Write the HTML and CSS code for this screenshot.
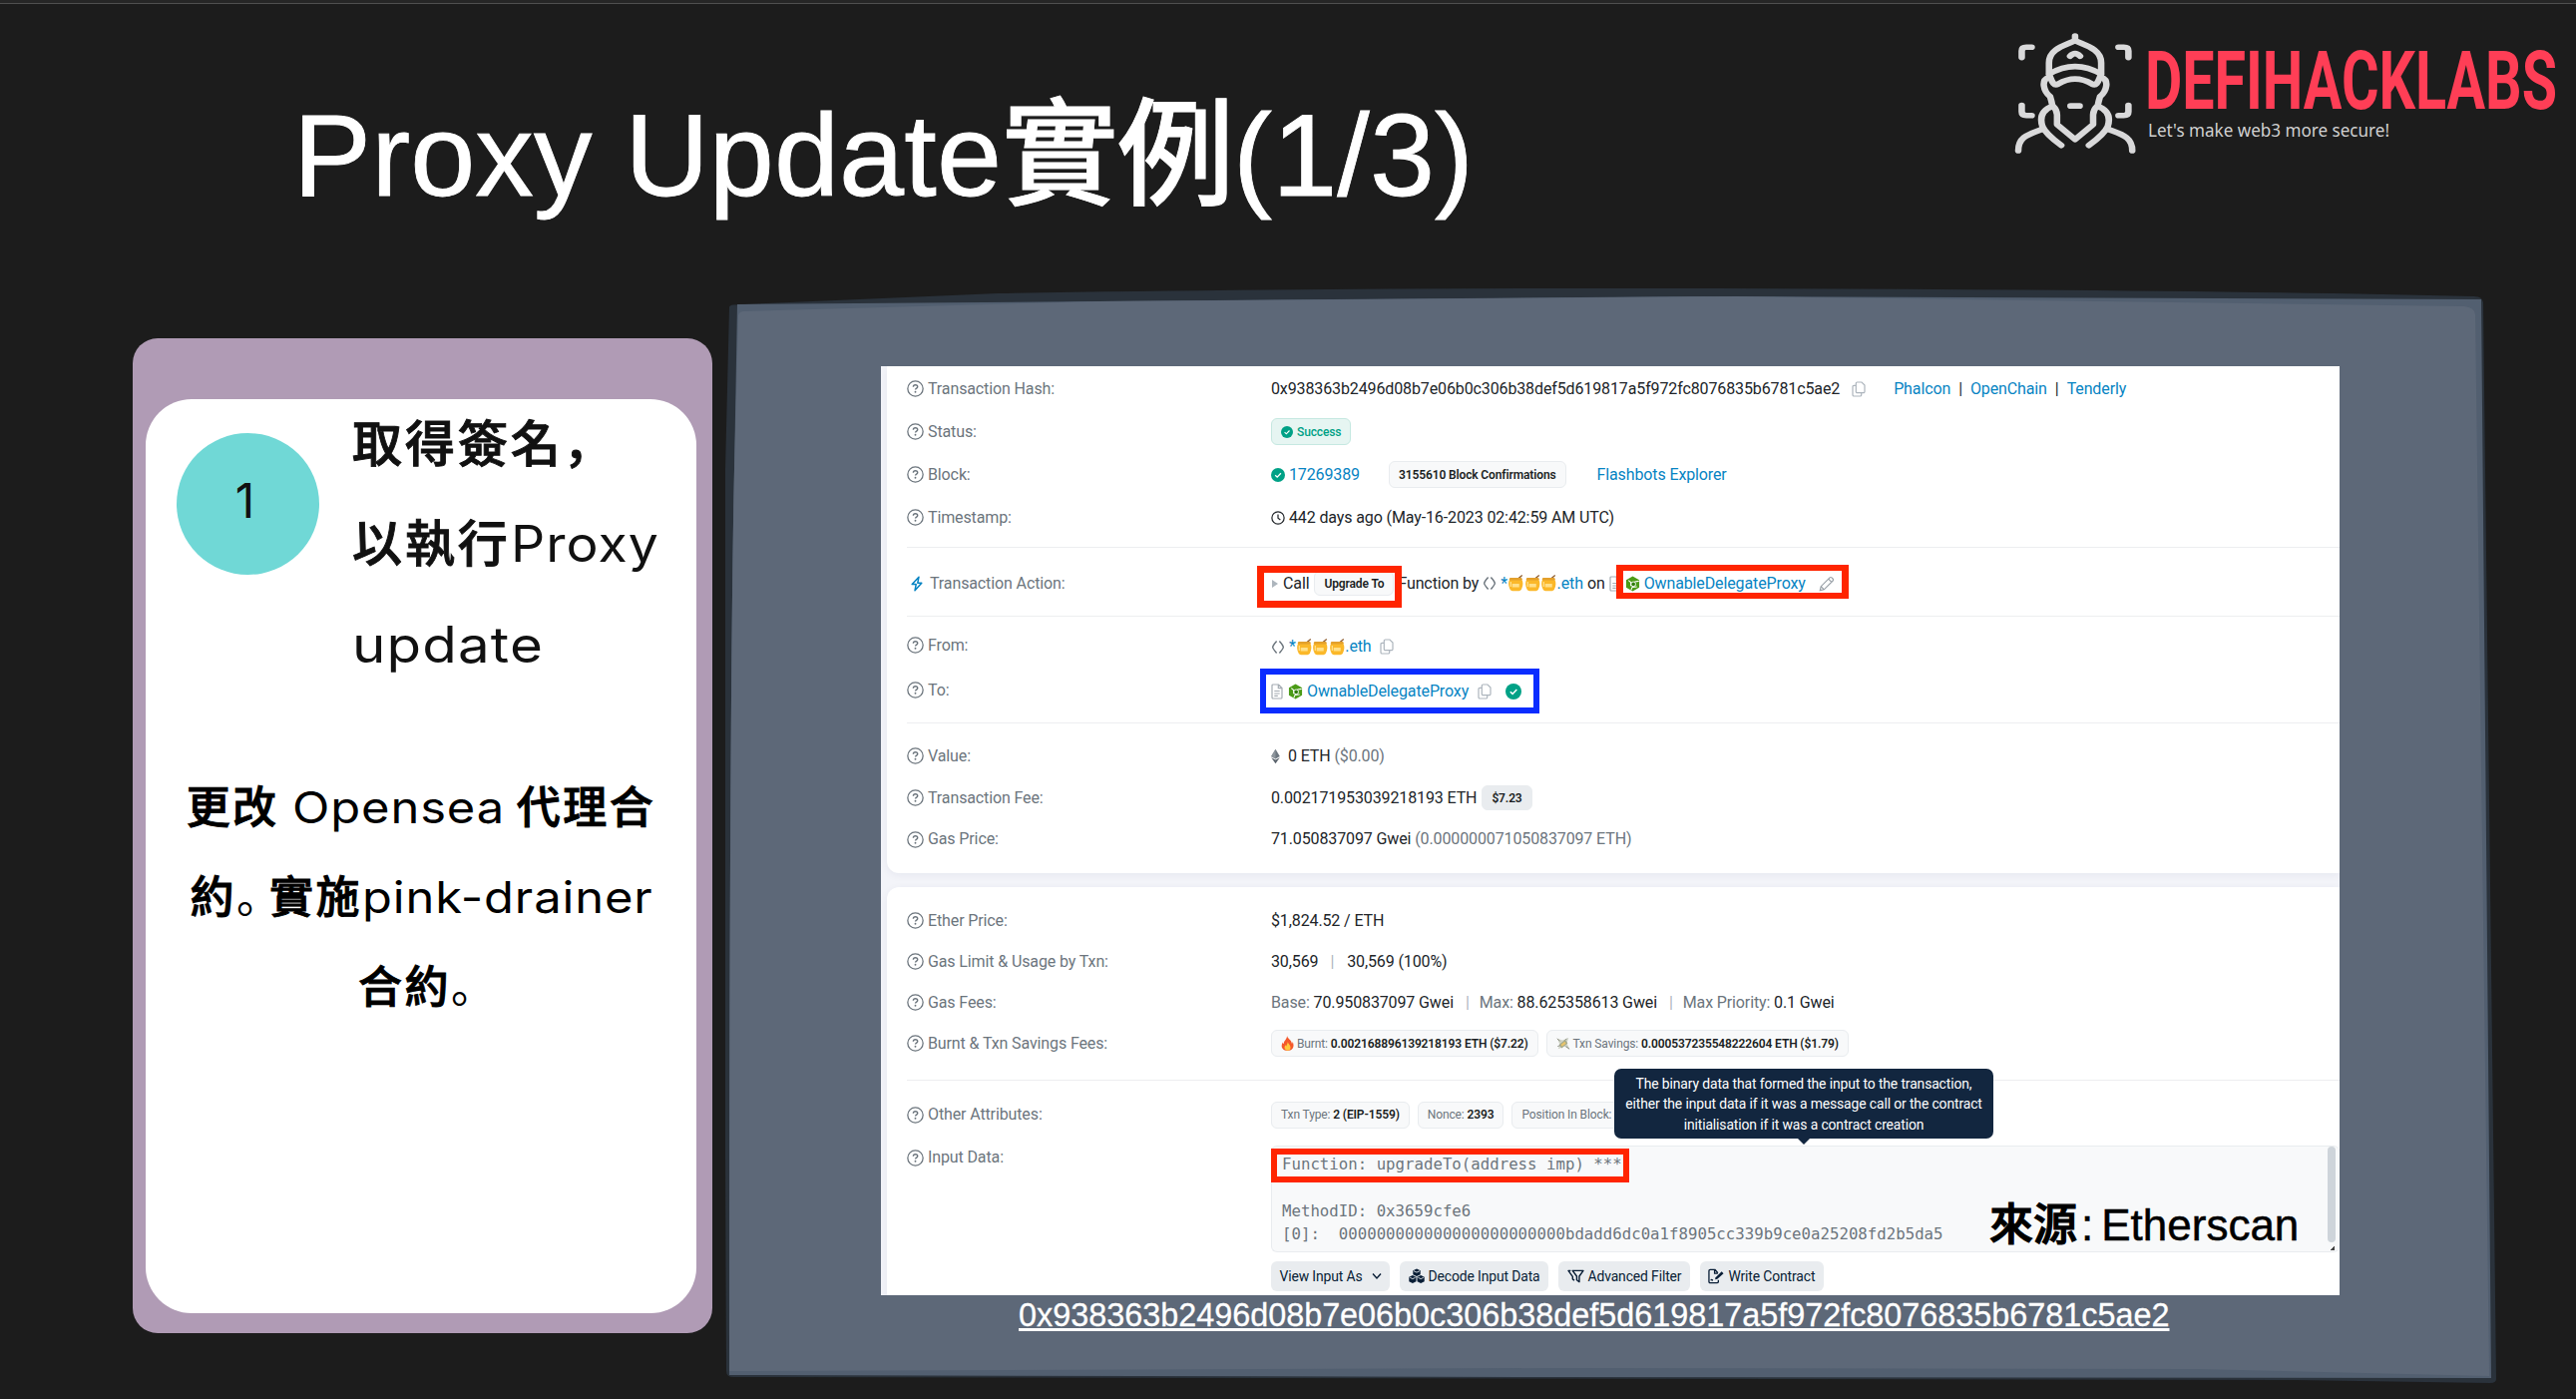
FILE: index.html
```html
<!DOCTYPE html>
<html lang="zh-Hant">
<head>
<meta charset="utf-8">
<title>Proxy Update實例(1/3)</title>
<link rel="stylesheet" href="styles.css">
</head>
<body>
<svg width="0" height="0" class="defs" aria-hidden="true">
  <symbol id="help" viewBox="0 0 16 16"><circle cx="8" cy="8" r="7.2" fill="none" stroke="#6c757d" stroke-width="1.2"/><path d="M6 6.3C6 5 6.9 4.5 8 4.5s2.1.7 2.1 1.8C10.1 7.600 8 7.600 8 9" fill="none" stroke="#6c757d" stroke-width="1.3"/><circle cx="8" cy="11" r=".9" fill="#6c757d"/></symbol>
  <symbol id="copy" viewBox="0 0 14 16"><path d="M5.500 1H10l3 3v6.500a1.200 1.200 0 0 1-1.200 1.200H5.500a1.200 1.200 0 0 1-1.200-1.200V2.200A1.200 1.200 0 0 1 5.500 1zM4 4.300H2.200A1.200 1.200 0 0 0 1 5.500v8.300A1.200 1.200 0 0 0 2.200 15h6.300a1.200 1.200 0 0 0 1.200-1.200v-2" fill="none" stroke="#adb5bd" stroke-width="1.2"/></symbol>
  <symbol id="check" viewBox="0 0 16 16"><circle cx="8" cy="8" r="8" fill="#00a186"/><path d="M4.800 8.200l2.300 2.200 4.200-4.400" fill="none" stroke="#fff" stroke-width="1.5"/></symbol>
  <symbol id="clock" viewBox="0 0 16 16"><circle cx="8" cy="8" r="7" fill="none" stroke="#212529" stroke-width="1.4"/><path d="M8 4v4.300l2.700 1.900" fill="none" stroke="#212529" stroke-width="1.4"/></symbol>
  <symbol id="bolt" viewBox="0 0 12 16"><path d="M8 1.200L1.200 8.600h4L4 14.800l6.800-7.600h-4z" fill="none" stroke="#0784c3" stroke-width="1.5" stroke-linejoin="round"/></symbol>
  <symbol id="code" viewBox="0 0 14 14"><path d="M5.600 1C4 3 1.700 5.500 1.700 7S4 11 5.600 13M8.400 1C10 3 12.300 5.500 12.300 7S10 11 8.400 13" fill="none" stroke="#6c757d" stroke-width="1.400"/></symbol>
  <symbol id="honey" viewBox="0 0 16 17"><path d="M9 5L14.500.6" stroke="#8d5a2b" stroke-width="1.300"/><path d="M2 4.500h12c1.600 2.500 1.600 6.500-.5 10.500a3 3 0 0 1-2.200 1.200H4.700A3 3 0 0 1 2.500 15C.4 11 .4 7 2 4.500z" fill="#fbb829"/><rect x="1.600" y="3" width="12.800" height="2.400" rx="1.200" fill="#e3a02c"/><path d="M4.500 9h7v3.500h-7z" fill="#ffe08a"/><path d="M3 7v5" stroke="#ffe9a8" stroke-width="1"/></symbol>
  <symbol id="doc" viewBox="0 0 12 16"><path d="M2 1h5.500L11 4.500V14a1 1 0 0 1-1 1H2a1 1 0 0 1-1-1V2a1 1 0 0 1 1-1zM7.300 1v3.700H11M3.300 7.500h5.400M3.300 10h5.400M3.300 12.300h3.500" fill="none" stroke="#a5acb3" stroke-width="1.2"/></symbol>
  <symbol id="cube" viewBox="0 0 16 16"><path d="M8 0l7 4v8l-7 4-7-4V4z" fill="#4b9b17"/><path d="M3.500 4.500l2.500 2v4M14.600 5.200L10 5.800M6.200 14.800l1.300-3 5-.5" fill="none" stroke="#fff" stroke-width="1.100"/><circle cx="8.700" cy="8.400" r="2.500" fill="#2f7d0c" stroke="#fff" stroke-width="1"/></symbol>
  <symbol id="pencil" viewBox="0 0 16 16"><path d="M1.300 14.700l.9-4L11 1.900a1.400 1.400 0 0 1 2 0l1.100 1.100a1.400 1.400 0 0 1 0 2L5.300 13.800zM9.700 3.200l3.100 3.100M2.200 10.700l3.100 3.100" fill="none" stroke="#9aa1a8" stroke-width="1.200"/></symbol>
  <symbol id="eth" viewBox="0 0 10 16"><path d="M5 0l4.800 8L5 10.800.2 8z" fill="#6d7780"/><path d="M5 0v10.800L.2 8z" fill="#8d959c"/><path d="M.2 9.300L5 12l4.800-2.700L5 16z" fill="#5b646d"/></symbol>
  <symbol id="fire" viewBox="0 0 14 16"><path d="M6.500 0c.6 3 5 4.600 5.300 8.500.6-.6.700-1.600.6-2.300C14.500 9.500 14 16 7 16S-.3 10 2 6.800c.1 1 .5 1.500 1 1.800C3 5 6.500 4 6.500 0z" fill="#f4592b"/><path d="M7.300 6.500c0 2 3 3.300 3 6 0 2-1.500 3.200-3.200 3.200s-3.300-1.200-3.300-3.100c0-1.200.7-2 1.200-2.600.2.800.5 1 .9 1.100 0-1.800 1.400-2.500 1.400-4.600z" fill="#ffc93c"/></symbol>
  <symbol id="money" viewBox="0 0 16 16"><path d="M1 2l6 2 7-3-2 6 3 7-6-3-7 3 2-5z" fill="#cfd3c6"/><path d="M3 9l7-5.500 3 4L6 13z" fill="#a3a88a"/><path d="M5 9l4.500-3.500 1.500 2.200L6.500 11z" fill="#e9c46a"/><path d="M1 2l3 3M15 14l-4-3M1.500 11L4 10M12 2l-2 2" stroke="#7d8073" stroke-width="1"/></symbol>
  <symbol id="cubes" viewBox="0 0 16 16"><path d="M8 .5l3.700 1.800v3.900L8 8 4.300 6.200V2.300zM3.900 7l3.600 1.800v4.400L3.900 15 .3 13.200V8.800zM12.100 7l3.600 1.800v4.400L12.100 15l-3.600-1.800V8.800z" fill="#081d35"/><path d="M5 2.700l3 1.400 3-1.400M1.200 9.300l2.700 1.300 2.700-1.300M9.400 9.300l2.700 1.300 2.700-1.300" fill="none" stroke="#e9ecef" stroke-width=".9"/></symbol>
  <symbol id="filter" viewBox="0 0 18 16"><path d="M5.500 1.500H17l-4.300 6v6l-2.700-2V7.500zM3.500 1.500H1l4.600 6.300V10.500l1.800 1.400" fill="none" stroke="#081d35" stroke-width="1.500" stroke-linejoin="round"/></symbol>
  <symbol id="write" viewBox="0 0 17 16"><path d="M10.500 4.500L7.500 1H2.200A1.200 1.200 0 0 0 1 2.200v11.600A1.200 1.200 0 0 0 2.200 15h7.600a1.200 1.200 0 0 0 1.200-1.200V12M7 1v4h3.500M3 12.500c1-2 1.500-.3 2.300 0" fill="none" stroke="#081d35" stroke-width="1.400"/><path d="M7.500 11.500l.5-2.300L14.500 3l2 2-6.600 6z" fill="#081d35"/></symbol>
</svg>

<header class="top">
  <h1 class="title">Proxy Update<span class="title-cjk">實例</span>(1/3)</h1>
  <div class="brand">
    <svg class="brand-face" viewBox="100 95 325 370" preserveAspectRatio="none" fill="none" stroke="#d9d9da" stroke-width="17" stroke-linecap="round" stroke-linejoin="round">
      <path d="M261 107V121M261 121C240 134 193 144 193 188V222M261 121C282 134 329 144 329 188V222M193 222Q261 176 329 222M193 222C200 240 203 260 217 252Q261 222 305 252C319 260 322 240 329 222M248 168Q261 152 274 168"/>
      <path d="M192 232C172 240 178 272 196 290Q200 305 202 318M330 232C350 240 344 272 326 290Q322 305 320 318M203 318Q214 330 214 345V374L261 419L308 374V345Q308 330 319 318M203 318C176 330 168 352 176 380Q184 402 225 437M319 318C346 330 354 352 346 380Q338 402 297 437M176 388C140 404 113 410 113 453M346 388C382 404 410 410 410 453M249 318H273"/>
      <path d="M122 172V152Q122 141 134 141H148M374 141H388Q400 141 400 152V172M122 316V336Q122 347 134 347H148M374 347H388Q400 347 400 336V316"/>
    </svg>
    <svg class="brand-words" width="424" height="110" viewBox="0 0 424 110">
      <text class="brand-name" x="1" y="76" textLength="413" lengthAdjust="spacingAndGlyphs">DEFIHACKLABS</text>
      <text class="brand-tag" x="4" y="104" textLength="242" lengthAdjust="spacingAndGlyphs">Let's make web3 more secure!</text>
    </svg>
  </div>
</header>

<main class="main">
  <section class="card">
    <div class="card-body">
      <div class="step">
        <div class="step-no">1</div>
        <h2 class="step-title"><span class="han" lang="ja">取得簽名，</span><br><span class="han">以執行</span><span class="wide-p">Proxy</span><br><span class="wide-u">update</span></h2>
      </div>
      <p class="step-text"><span class="han2">更改</span> <span class="wide-o">Opensea</span> <span class="han2">代理合<br>約</span><span class="stop" lang="ja">。</span><span class="han2">實施</span><span class="wide-d">pink-drainer</span><br><span class="han2">合約</span><span class="stop" lang="ja">。</span></p>
    </div>
  </section>

  <section class="board">
    <svg class="board-bg" width="1776" height="1098" viewBox="727 289 1776 1098" aria-hidden="true">
      <path d="M731 308Q731 306 735 305.500L1000 294Q1300 288.500 1720 289Q2200 290 2480 297Q2488 297 2489 303L2502 1382Q2502 1386 2496 1386L2300 1383L735 1380Q728 1380 728 1374Q725 800 727 470z" fill="#2a323b"/>
      <path d="M739 305L1100 302L1700 297L2487 300L2497 1381L1560 1380L731 1378Q731 700 736 470z" fill="#525f70"/>
      <path d="M740 316Q741 312 746 312L1100 302L1740 297L2470 307Q2480 308 2481 315L2495 1379L2200 1372L1560 1371L731 1374Q731 700 736 470z" fill="#5d6878"/>
    </svg>

    <div class="shot">
      <div class="panel panel-a">
        <div class="group g1">
          <div class="row"><span class="label"><svg><use href="#help"/></svg>Transaction Hash:</span><span class="val">0x938363b2496d08b7e06b0c306b38def5d619817a5f972fc8076835b6781c5ae2<svg class="i-copy m12"><use href="#copy"/></svg><a class="m28">Phalcon</a><span class="bar">|</span><a>OpenChain</a><span class="bar">|</span><a>Tenderly</a></span></div>
          <div class="row"><span class="label"><svg><use href="#help"/></svg>Status:</span><span class="val"><span class="pill ok"><svg class="i12"><use href="#check"/></svg>Success</span></span></div>
          <div class="row"><span class="label"><svg><use href="#help"/></svg>Block:</span><span class="val"><svg class="i14"><use href="#check"/></svg><a class="m4">17269389</a><span class="pill strong conf">3155610 Block Confirmations</span><a class="m31">Flashbots Explorer</a></span></div>
          <div class="row"><span class="label"><svg><use href="#help"/></svg>Timestamp:</span><span class="val"><svg class="i14"><use href="#clock"/></svg><span class="m4">442 days ago (May-16-2023 02:42:59 AM UTC)</span></span></div>
        </div>
        <div class="group g2">
          <div class="row"><span class="label act"><svg><use href="#bolt"/></svg>Transaction Action:</span><span class="val"><i class="tri"></i>Call<span class="pill strong upg">Upgrade To</span><span class="m4">Function by</span><svg class="i-code m4"><use href="#code"/></svg><a class="m4 ens">*<svg><use href="#honey"/></svg><svg><use href="#honey"/></svg><svg><use href="#honey"/></svg>.eth</a><span class="m4">on</span><svg class="i-doc m4"><use href="#doc"/></svg><svg class="i-cube m4"><use href="#cube"/></svg><a class="m4">OwnableDelegateProxy</a><svg class="i16 m13"><use href="#pencil"/></svg></span></div>
        </div>
        <div class="group g3">
          <div class="row"><span class="label"><svg><use href="#help"/></svg>From:</span><span class="val low"><svg class="i-code"><use href="#code"/></svg><a class="m4 ens">*<svg><use href="#honey"/></svg><svg><use href="#honey"/></svg><svg><use href="#honey"/></svg>.eth</a><svg class="i-copy m8"><use href="#copy"/></svg></span></div>
          <div class="row"><span class="label"><svg><use href="#help"/></svg>To:</span><span class="val low"><svg class="i-doc"><use href="#doc"/></svg><svg class="i-cube m5"><use href="#cube"/></svg><a class="m4">OwnableDelegateProxy</a><svg class="i-copy m9"><use href="#copy"/></svg><svg class="i16 m14"><use href="#check"/></svg></span></div>
        </div>
        <div class="group g4">
          <div class="row"><span class="label"><svg><use href="#help"/></svg>Value:</span><span class="val"><svg class="i-eth"><use href="#eth"/></svg><span class="m8">0 ETH <em>($0.00)</em></span></span></div>
          <div class="row"><span class="label"><svg><use href="#help"/></svg>Transaction Fee:</span><span class="val">0.002171953039218193 ETH<span class="pill strong usd">$7.23</span></span></div>
          <div class="row"><span class="label"><svg><use href="#help"/></svg>Gas Price:</span><span class="val">71.050837097 Gwei <em>(0.000000071050837097 ETH)</em></span></div>
        </div>
      </div>

      <div class="panel panel-b">
        <div class="group g5">
          <div class="row"><span class="label"><svg><use href="#help"/></svg>Ether Price:</span><span class="val">$1,824.52 / ETH</span></div>
          <div class="row"><span class="label"><svg><use href="#help"/></svg>Gas Limit &amp; Usage by Txn:</span><span class="val">30,569<span class="sep">|</span>30,569 (100%)</span></div>
          <div class="row"><span class="label"><svg><use href="#help"/></svg>Gas Fees:</span><span class="val"><em>Base: </em>70.950837097 Gwei<span class="sep tight">|</span><em>Max: </em>88.625358613 Gwei<span class="sep tight">|</span><em>Max Priority: </em>0.1 Gwei</span></div>
          <div class="row"><span class="label"><svg><use href="#help"/></svg>Burnt &amp; Txn Savings Fees:</span><span class="val"><span class="pill"><svg class="i-fire"><use href="#fire"/></svg><em>Burnt: </em><b>0.002168896139218193 ETH ($7.22)</b></span><span class="pill m8"><svg class="i-money"><use href="#money"/></svg><em>Txn Savings: </em><b>0.000537235548222604 ETH ($1.79)</b></span></span></div>
        </div>
        <div class="group g6">
          <div class="row"><span class="label"><svg><use href="#help"/></svg>Other Attributes:</span><span class="val"><span class="pill"><em>Txn Type: </em><b>2 (EIP-1559)</b></span><span class="pill m8"><em>Nonce: </em><b>2393</b></span><span class="pill m8"><em>Position In Block: </em><b>186</b></span></span></div>
          <div class="input-row"><span class="label"><svg><use href="#help"/></svg>Input Data:</span>
            <div class="input-col">
              <div class="code"><pre>Function: upgradeTo(address imp) ***

MethodID: 0x3659cfe6
[0]:  000000000000000000000000bdadd6dc0a1f8905cc339b9ce0a25208fd2b5da5</pre><div class="scroll"><i class="thumb"></i><i class="grip"></i></div></div>
              <div class="btns">
                <span class="btn">View Input As<svg class="i-chev" viewBox="0 0 10 8"><path d="M1 1.500l4 4.500 4-4.500" fill="none" stroke="#081d35" stroke-width="1.400"/></svg></span>
                <span class="btn"><svg class="i16"><use href="#cubes"/></svg>Decode Input Data</span>
                <span class="btn"><svg class="i-filter"><use href="#filter"/></svg>Advanced Filter</span>
                <span class="btn"><svg class="i16"><use href="#write"/></svg>Write Contract</span>
              </div>
            </div>
          </div>
        </div>
      </div>

      <div class="mark mark-call"></div>
      <div class="mark mark-proxy"></div>
      <div class="mark mark-to"></div>
      <div class="mark mark-fn"></div>
      <div class="tip">The binary data that formed the input to the transaction,<br>either the input data if it was a message call or the contract<br>initialisation if it was a contract creation</div>
      <div class="source"><span class="source-han">來源</span><span class="source-colon">:</span>Etherscan</div>
    </div>
    <a class="link">0x938363b2496d08b7e06b0c306b38def5d619817a5f972fc8076835b6781c5ae2</a>
  </section>
</main>
</body>
</html>
```
FILE: styles.css
```css
* { box-sizing: border-box; }
body {
  margin: 0;
  width: 2582px;
  height: 1402px;
  overflow: hidden;
  background: #1c1c1c;
  border-top: 3px solid #262626;
  font-family: "Liberation Sans", "Noto Sans CJK TC", sans-serif;
}
.defs { position: absolute; }
svg { display: block; flex: none; }
em { font-style: normal; color: #6c757d; }
b { font-weight: 600; color: #1b1f23; }

.top {
  display: flex;
  justify-content: space-between;
  align-items: flex-start;
  height: 286px;
  border-top: 1px solid #4f4f4f;
  padding-left: 294px;
  padding-right: 9px;
}
.title {
  margin: 82px 0 0;
  font-size: 117px;
  line-height: 140px;
  font-weight: 400;
  color: #fff;
  -webkit-text-stroke: .8px #fff;
  letter-spacing: .1px;
  white-space: nowrap;
}
.title-cjk { font-weight: 500; letter-spacing: -1px; }
.brand { display: flex; }
.brand-face { width: 125px; height: 123px; margin-top: 28px; }
.brand-words { margin: 29px 0 0 6px; overflow: visible; }
.brand-name { font: 700 82px Roboto, sans-serif; fill: #ff3e56; }
.brand-tag { font: 400 18px "Noto Sans", sans-serif; fill: #d0d0d0; }

.main { display: flex; align-items: flex-start; }
.card {
  width: 581px;
  height: 997px;
  margin: 50px 13px 0 133px;
  padding: 61px 16px 20px 13px;
  border-radius: 25px;
  background: #b09bb5;
}
.card-body {
  height: 916px;
  border-radius: 46px;
  background: #fff;
}
.step { display: flex; padding-left: 31px; }
.step-no {
  width: 143px;
  height: 142px;
  margin-top: 34px;
  padding-right: 6px;
  border-radius: 50%;
  background: #70d8d6;
  color: #111;
  font: 400 48px/136px Inter, sans-serif;
  text-align: center;
}
.step-title {
  margin: -5px 0 0 33px;
  font: 400 50px/100.3px Inter, "Noto Sans CJK JP", sans-serif;
  letter-spacing: 1px;
  color: #111;
  white-space: nowrap;
}
.han, .han2 { -webkit-text-stroke: .9px currentColor; font-weight: 500; }
.han { letter-spacing: 2.900px; }
.wide-p, .wide-u, .wide-o, .wide-d { display: inline-block; transform-origin: 0 50%; }
.wide-p { transform: scaleX(1.07); }
.wide-u { transform: scaleX(1.130); }
.wide-o, .wide-d { transform: scaleX(1.110); }
.wide-o { margin-right: 20px; }
.wide-d { margin-right: 28px; }
.step-text {
  margin: 68px 0 0;
  font: 400 44px/90px Inter, "Noto Sans CJK JP", sans-serif;
  letter-spacing: .8px;
  color: #000;
  text-align: center;
  white-space: nowrap;
}
.han2 { letter-spacing: 2.500px; }
.stop { letter-spacing: -11px; }

.board {
  position: relative;
  width: 1776px;
  height: 1098px;
  padding: 78px 0 0 156px;
}
.board-bg { position: absolute; left: 0; top: 0; }
.shot {
  position: relative;
  width: 1462px;
  height: 931px;
  padding-left: 6px;
  overflow: hidden;
  background: #f3f4f9;
  font: 400 16px/20px Roboto, sans-serif;
  letter-spacing: -.12px;
  color: #212529;
}
.panel { background: #fff; padding-left: 20px; box-shadow: 0 2px 8px rgba(20, 30, 80, .06); }
.panel-a { height: 508px; border-bottom-left-radius: 12px; }
.panel-b { height: 420px; margin-top: 14px; border-top-left-radius: 12px; }
.group + .group { border-top: 1px solid #edeef0; }
.row { display: grid; grid-template-columns: 365px 1fr; align-items: center; height: 43px; }
.g1 { height: 181px; padding-top: 1px; }
.g2 { height: 69px; padding-top: 14px; }
.g3 { height: 107px; padding-top: 6px; }
.g3 .row { height: 45px; }
.g4 { padding-top: 12px; }
.g4 .row { height: 41.700px; }
.g5 { height: 193px; padding-top: 13px; }
.g5 .row { height: 41px; }
.g6 { padding-top: 13px; }
.g6 .row { height: 42px; }
.label { display: flex; align-items: center; gap: 4px; color: #6c757d; white-space: nowrap; }
.label svg { width: 17px; height: 17px; }
.act { gap: 7px; padding-left: 4px; }
.act svg { width: 12px; height: 16px; }
.val { display: flex; align-items: center; white-space: pre; }
.low { padding-top: 3px; }
a { color: #0784c3; }
.bar { margin: 0 8px; }
.sep { margin: 0 13px 0 12px; color: #adb5bd; }
.tight { margin: 0 10px 0 12px; }
.m4 { margin-left: 4px; }
.m5 { margin-left: 5px; }
.m8 { margin-left: 8px; }
.m9 { margin-left: 9px; }
.m12 { margin-left: 12px; }
.m13 { margin-left: 13px; }
.m14 { margin-left: 14px; }
.m28 { margin-left: 28px; }
.m31 { margin-left: 31px; }
.i12 { width: 12px; height: 12px; margin-right: 4px; }
.i14 { width: 14px; height: 14px; }
.i16 { width: 16px; height: 16px; }
.i-copy { width: 14px; height: 16px; }
.i-code { width: 14px; height: 15px; }
.i-doc { width: 12px; height: 16px; }
.i-cube { width: 15px; height: 16px; }
.i-eth { width: 9px; height: 16px; }
.i-fire { width: 13px; height: 15px; margin-right: 3px; }
.i-money { width: 14px; height: 14px; margin-right: 3px; }
.i-filter { width: 17px; height: 15px; }
.i-chev { width: 10px; height: 8px; margin-left: 5px; }
.tri { border: 4px solid transparent; border-left: 6px solid #adb5bd; border-right: 0; margin: 0 5px 0 1px; }
.ens { display: flex; align-items: center; }
.ens svg { width: 16.500px; height: 17px; }
.pill {
  display: flex;
  align-items: center;
  height: 27px;
  padding: 0 9px;
  border: 1px solid #e9ecef;
  border-radius: 6px;
  background: #f8f9fa;
  font-size: 12px;
}
.strong { font-weight: 600; color: #1b1f23; }
.ok { background: #e6f5f2; border-color: #c5e8e1; color: #00a186; font-weight: 500; }
.conf { margin-left: 29px; }
.upg { margin-left: 5px; height: 25px; }
.usd { margin-left: 5px; height: 25px; background: #e9ecef; }

.input-row { display: grid; grid-template-columns: 365px 1fr; align-items: start; }
.input-row > .label { padding-top: 12px; }
.input-col { margin-top: 10px; }
.code {
  position: relative;
  display: flex;
  justify-content: space-between;
  height: 107px;
  padding-left: 10px;
  border: 1px solid #e9ecef;
  border-right: 0;
  border-radius: 6px;
  background: #f8f9fa;
}
pre {
  margin: 6px 0 0;
  font: 15.700px/23.300px "DejaVu Sans Mono", monospace;
  letter-spacing: .02px;
  color: #6c757d;
}
.scroll { width: 12px; }
.thumb { display: block; width: 8px; height: 96px; border-radius: 4px; background: #ced4da; }
.grip { display: block; width: 4px; height: 4px; margin: 4px 0 0 3px; background: linear-gradient(135deg, transparent 50%, #444 50%); }
.btns { display: flex; gap: 10px; margin-top: 9px; }
.btn {
  display: flex;
  align-items: center;
  gap: 4px;
  height: 30px;
  padding: 0 8.500px;
  border-radius: 6px;
  background: #e9ecef;
  font-size: 13.900px;
  color: #081d35;
  white-space: nowrap;
}

/* highlight frames over the transaction details */
.mark { position: absolute; border: 7px solid #ff2500; }
.mark-call { left: 377px; top: 200px; width: 145px; height: 42px; }
.mark-proxy { left: 737px; top: 199px; width: 233px; height: 34px; border-width: 6px 7px; }
.mark-to { left: 380px; top: 303px; width: 280px; height: 45px; border-color: #0a2cff; border-width: 6.500px; }
.mark-fn { left: 391px; top: 784px; width: 359px; height: 34px; border-width: 6px; }
.tip {
  position: absolute;
  left: 735px;
  top: 704px;
  width: 380px;
  height: 70px;
  padding-top: 5px;
  border-radius: 7px;
  background: #12263f;
  color: #fff;
  font-size: 13.900px;
  line-height: 20.400px;
  text-align: center;
  white-space: nowrap;
}
.tip::after {
  content: "";
  position: absolute;
  left: 184px;
  top: 70px;
  border: 6px solid transparent;
  border-top-color: #12263f;
}
.source {
  position: absolute;
  left: 1111px;
  top: 836px;
  font: 400 44px/50px "Liberation Sans", "Noto Sans CJK TC", sans-serif;
  letter-spacing: 0;
  color: #000;
  -webkit-text-stroke: .5px #000;
  white-space: nowrap;
}
.source-han { font-weight: 500; -webkit-text-stroke-width: 1.200px; }
.source-colon { margin: 0 8px 0 4px; }
.link {
  display: block;
  position: relative;
  padding-left: 138px;
  font-size: 32.370px;
  line-height: 40px;
  color: #fff;
  -webkit-text-stroke: .3px #fff;
  text-decoration: underline;
}
```
